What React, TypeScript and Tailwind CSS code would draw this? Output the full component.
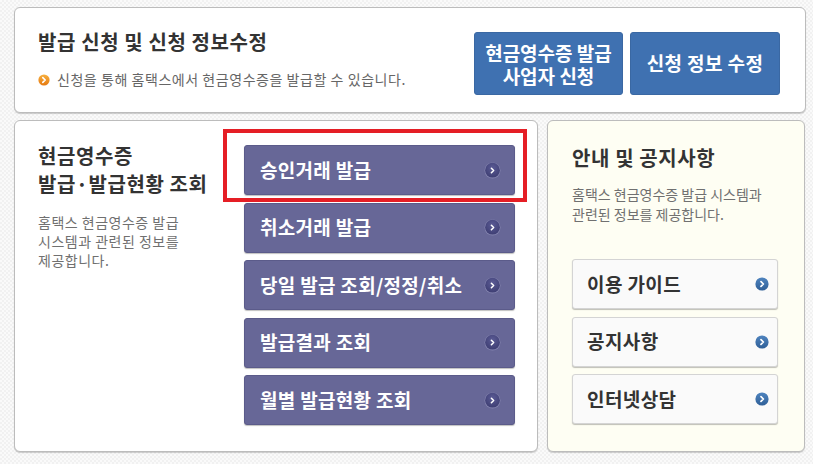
import React from "react";

const font = { fontFamily: '"Noto Sans CJK KR", "Noto Sans", sans-serif' };

function OrangeDot() {
  return (
    <svg width="12" height="12" viewBox="0 0 12 12" className="shrink-0">
      <defs>
        <linearGradient id="og" x1="0" y1="0" x2="0" y2="1">
          <stop offset="0" stopColor="#f7b141" />
          <stop offset="1" stopColor="#e5780f" />
        </linearGradient>
      </defs>
      <circle cx="6" cy="6" r="5.6" fill="url(#og)" />
      <path d="M4.8 3.6 L7.2 6 L4.8 8.4" stroke="#fff" strokeWidth="1.6" fill="none" strokeLinecap="round" strokeLinejoin="round" />
    </svg>
  );
}

function PurpleDot() {
  return (
    <svg width="17" height="17" viewBox="0 0 17 17" className="shrink-0">
      <defs>
        <radialGradient id="pg" cx="0.5" cy="0.35" r="0.65">
          <stop offset="0" stopColor="#5b5b95" />
          <stop offset="1" stopColor="#3e3e73" />
        </radialGradient>
      </defs>
      <circle cx="8.5" cy="8.5" r="8" fill="#8585b0" />
      <circle cx="8.5" cy="8.2" r="7.4" fill="url(#pg)" />
      <path d="M7.4 6.3 L9.6 8.5 L7.4 10.7" stroke="#fff" strokeWidth="1.6" fill="none" strokeLinecap="round" strokeLinejoin="round" />
    </svg>
  );
}

function BlueDot() {
  return (
    <svg width="14" height="14" viewBox="0 0 14 14" className="shrink-0">
      <defs>
        <linearGradient id="bg" x1="0" y1="0" x2="0" y2="1">
          <stop offset="0" stopColor="#4f84bf" />
          <stop offset="1" stopColor="#2f5f97" />
        </linearGradient>
      </defs>
      <circle cx="7" cy="7" r="6.6" fill="url(#bg)" />
      <path d="M6 4.6 L8.4 7 L6 9.4" stroke="#fff" strokeWidth="1.7" fill="none" strokeLinecap="round" strokeLinejoin="round" />
    </svg>
  );
}

const purpleItems = [
  "승인거래 발급",
  "취소거래 발급",
  "당일 발급 조회/정정/취소",
  "발급결과 조회",
  "월별 발급현황 조회",
];

const guideItems = ["이용 가이드", "공지사항", "인터넷상담"];

export default function App() {
  return (
    <div
      style={font}
      className="w-[813px] h-[464px] overflow-hidden bg-[#f6f6f6] bg-[repeating-conic-gradient(#f1f1f1_0_25%,#fafafa_0_50%)] bg-[length:4px_4px] pl-[14px] pr-[7px] pt-[7px] flex flex-col gap-[7px]"
    >
      {/* Top panel */}
      <div className="h-[106px] bg-white border border-[#bcbcbc] rounded-[6px] shadow-[0_1px_1px_rgba(0,0,0,0.18)] flex justify-between pl-[23px] pr-[25px]">
        <div className="flex flex-col pt-[20px]">
          <div className="text-[20px] leading-[28px] font-bold text-[#333] tracking-[0.6px]">
            발급 신청 및 신청 정보수정
          </div>
          <div className="flex items-center gap-[7px] mt-[14px]">
            <OrangeDot />
            <span className="text-[14px] leading-[19px] text-[#666] tracking-[0.55px]">
              신청을 통해 홈택스에서 현금영수증을 발급할 수 있습니다.
            </span>
          </div>
        </div>
        <div className="flex gap-[7px] pt-[24px]">
          <div className="w-[149px] h-[63px] bg-[#3f71b1] rounded-[3px] border border-[#3a68a3] flex flex-col items-center justify-center text-white font-bold text-[19px] leading-[23px] text-center">
            <span>현금영수증 발급</span>
            <span>사업자 신청</span>
          </div>
          <div className="w-[150px] h-[63px] bg-[#3f71b1] rounded-[3px] border border-[#3a68a3] flex items-center justify-center text-white font-bold text-[19px] tracking-[0.4px]">
            신청 정보 수정
          </div>
        </div>
      </div>

      {/* Bottom row */}
      <div className="flex gap-[9px]">
        <div className="relative w-[524px] h-[332px] bg-white border border-[#bcbcbc] rounded-[6px] shadow-[0_1px_1px_rgba(0,0,0,0.18)] flex pl-[23px]">
          <div className="w-[206px] pt-[21px] flex flex-col">
            <div className="text-[20px] leading-[28px] font-bold text-[#333] tracking-[0.6px]">
              현금영수증
              <br />
              발급·발급현황 조회
            </div>
            <div className="mt-[15px] text-[14px] leading-[19px] text-[#707070] tracking-[0.5px]">
              홈택스 현금영수증 발급
              <br />
              시스템과 관련된 정보를
              <br />
              제공합니다.
            </div>
          </div>
          <div className="flex flex-col gap-[7.5px] pt-[24px]">
            {purpleItems.map((t) => (
              <div
                key={t}
                className="w-[271px] h-[50px] bg-[#676797] border border-[#5b5b8a] rounded-[3px] shadow-[0_1px_1px_rgba(0,0,0,0.25)] flex items-center justify-between pl-[15px] pr-[13px]"
              >
                <span className="text-white font-bold text-[19px] tracking-[0.3px]">{t}</span>
                <PurpleDot />
              </div>
            ))}
          </div>
          <div className="absolute left-[208px] top-[8px] w-[304px] h-[73px] border-[4px] border-[#e51e25]" />
        </div>

        <div className="w-[258px] h-[332px] bg-[#fefef3] border border-[#bcbcbc] rounded-[6px] shadow-[0_1px_1px_rgba(0,0,0,0.18)] pl-[24px] pt-[23px] flex flex-col">
          <div className="text-[20px] leading-[28px] font-bold text-[#333] tracking-[0.6px]">안내 및 공지사항</div>
          <div className="mt-[12px] text-[14px] leading-[20px] text-[#707070]">
            홈택스 현금영수증 발급 시스템과
            <br />
            관련된 정보를 제공합니다.
          </div>
          <div className="mt-[35px] flex flex-col gap-[7.5px]">
            {guideItems.map((t) => (
              <div
                key={t}
                className="w-[206px] h-[50px] bg-[#fafafa] border border-[#d4d4d4] rounded-[3px] shadow-[0_1px_1px_rgba(0,0,0,0.25)] flex items-center justify-between pl-[14px] pr-[8px]"
              >
                <span className="text-[#333] font-bold text-[19px] tracking-[0.4px]">{t}</span>
                <BlueDot />
              </div>
            ))}
          </div>
        </div>
      </div>
    </div>
  );
}
